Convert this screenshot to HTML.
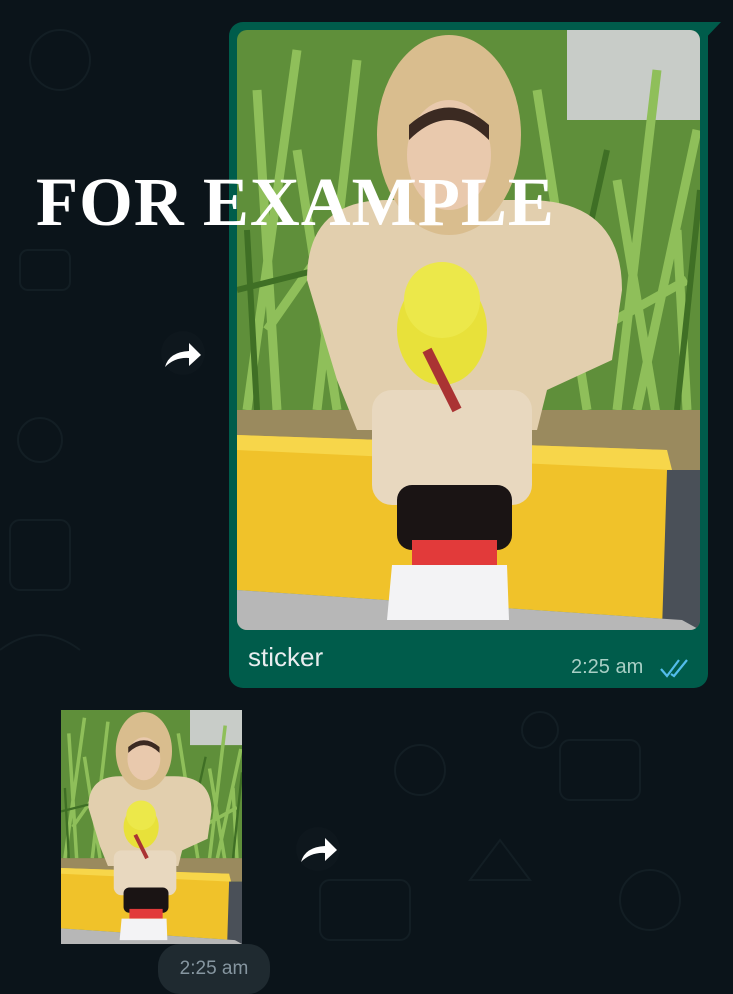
<!DOCTYPE html>
<html><head><meta charset="utf-8">
<style>
html,body{margin:0;padding:0}
body{width:733px;height:979px;overflow:hidden;background:#0b141a;position:relative;font-family:"Liberation Sans",sans-serif}
.abs{position:absolute}
.bubble{left:229px;top:22px;width:479px;height:666px;background:#005c4b;border-radius:14px 0 14px 14px}
.tail{left:700px;top:22px;width:0;height:0;border-top:22px solid #005c4b;border-right:21px solid transparent}
.photo{left:237px;top:30px;width:463px;height:600px;border-radius:10px;overflow:hidden}
.small{left:61px;top:710px;width:181px;height:234px;overflow:hidden}
.cap{left:248px;top:642px;color:#e9edef;font-size:26px}
.time{left:571px;top:656px;color:#a8cfc5;font-size:20px}
.fwd{width:44px;height:44px;border-radius:50%;background:#0e171d}
.pill{left:158px;top:944px;width:112px;height:50px;border-radius:22px;background:#1f2a30;color:#8696a0;font-size:19px;text-align:center;line-height:50px}
.over{left:36px;top:163px;color:#fff;font-family:"Liberation Serif",serif;font-weight:bold;font-size:69px;letter-spacing:1px;white-space:nowrap}
</style></head><body>
<svg class="abs" style="left:0;top:0" width="733" height="979">
<g fill="none" stroke="#131e24" stroke-width="2">
<circle cx="60" cy="60" r="30"/><rect x="20" y="250" width="50" height="40" rx="8"/><circle cx="40" cy="440" r="22"/>
<rect x="10" y="520" width="60" height="70" rx="10"/><path d="M0 650q40 -30 80 0"/><circle cx="420" cy="770" r="25"/>
<rect x="560" y="740" width="80" height="60" rx="10"/><path d="M470 880l30 -40 30 40z"/><circle cx="650" cy="900" r="30"/>
<rect x="320" y="880" width="90" height="60" rx="10"/><circle cx="540" cy="730" r="18"/>
</g></svg>
<svg width="0" height="0" style="position:absolute"><defs>
<symbol id="ph" viewBox="0 0 463 600" preserveAspectRatio="none">
<rect width="463" height="600" fill="#5f8f3a"/>
<rect x="330" width="133" height="90" fill="#c8ccc8"/>
<g stroke="#8fbf5a" stroke-width="9" fill="none">
<path d="M10 380L60 20M40 380L20 60M80 380L120 30M100 380L60 120M380 380L420 40M400 380L460 100M350 380L300 60M420 390L380 150M450 380L440 200M30 300L100 200M360 300L450 250"/>
</g>
<g stroke="#3f6f25" stroke-width="6" fill="none"><path d="M0 260L80 240M20 380L10 200M440 380L463 160M330 300L370 120"/></g>
<rect y="380" width="463" height="60" fill="#9a8a5e"/>
<path d="M0 405L430 420L445 590L0 560Z" fill="#f0c22a"/>
<path d="M0 405L430 420L435 440L0 420Z" fill="#f7d64a"/>
<path d="M430 440L463 440L463 600L425 600Z" fill="#4a5058"/>
<path d="M0 560L445 590L463 600L0 600Z" fill="#b7b7b7"/>
<path d="M70 250Q70 170 150 170L290 170Q385 170 385 260L375 330L310 360L300 400L120 400L100 350Z" fill="#e2cfae"/>
<rect x="135" y="360" width="160" height="115" rx="20" fill="#e8d8bf"/>
<rect x="160" y="455" width="115" height="65" rx="15" fill="#1a1414"/>
<rect x="175" y="510" width="85" height="25" fill="#e23a3a"/>
<path d="M155 535L270 535L272 590L150 590Z" fill="#f3f3f5"/>
<ellipse cx="212" cy="105" rx="72" ry="100" fill="#d9bd8e"/>
<ellipse cx="212" cy="125" rx="42" ry="55" fill="#e9c9ad"/>
<path d="M172 110Q212 70 252 110L252 95Q212 60 172 95Z" fill="#3b2a22"/>
<ellipse cx="205" cy="300" rx="45" ry="55" fill="#e8e13a"/>
<circle cx="205" cy="270" r="38" fill="#ece84a"/>
<path d="M190 320L220 380" stroke="#a33" stroke-width="10"/>
</symbol></defs></svg>
<div class="abs bubble"></div><div class="abs tail"></div>
<svg class="abs photo" viewBox="0 0 463 600"><use href="#ph"/></svg>
<div class="abs cap">sticker</div>
<div class="abs time">2:25 am</div>
<svg class="abs" style="left:659px;top:657px" width="32" height="22" viewBox="0 0 32 22"><path d="M2 12l6 7L20 3M12 17l3 2L28 3" stroke="#53bdeb" stroke-width="2.2" fill="none"/></svg>
<div class="abs over">FOR EXAMPLE</div>
<div class="abs fwd" style="left:161px;top:331px"></div>
<svg class="abs" style="left:163px;top:340px" width="40" height="30" viewBox="0 0 40 30"><path d="M2 27Q6 12 26 11L26 3L38 15L26 26L26 18Q12 17 2 27Z" fill="#fff"/></svg>
<svg class="abs small" viewBox="0 0 463 600" preserveAspectRatio="none"><use href="#ph"/></svg>
<div class="abs fwd" style="left:296px;top:827px"></div>
<svg class="abs" style="left:299px;top:835px" width="40" height="30" viewBox="0 0 40 30"><path d="M2 27Q6 12 26 11L26 3L38 15L26 26L26 18Q12 17 2 27Z" fill="#fff"/></svg>
<div class="abs pill">2:25 am</div>
</body></html>
